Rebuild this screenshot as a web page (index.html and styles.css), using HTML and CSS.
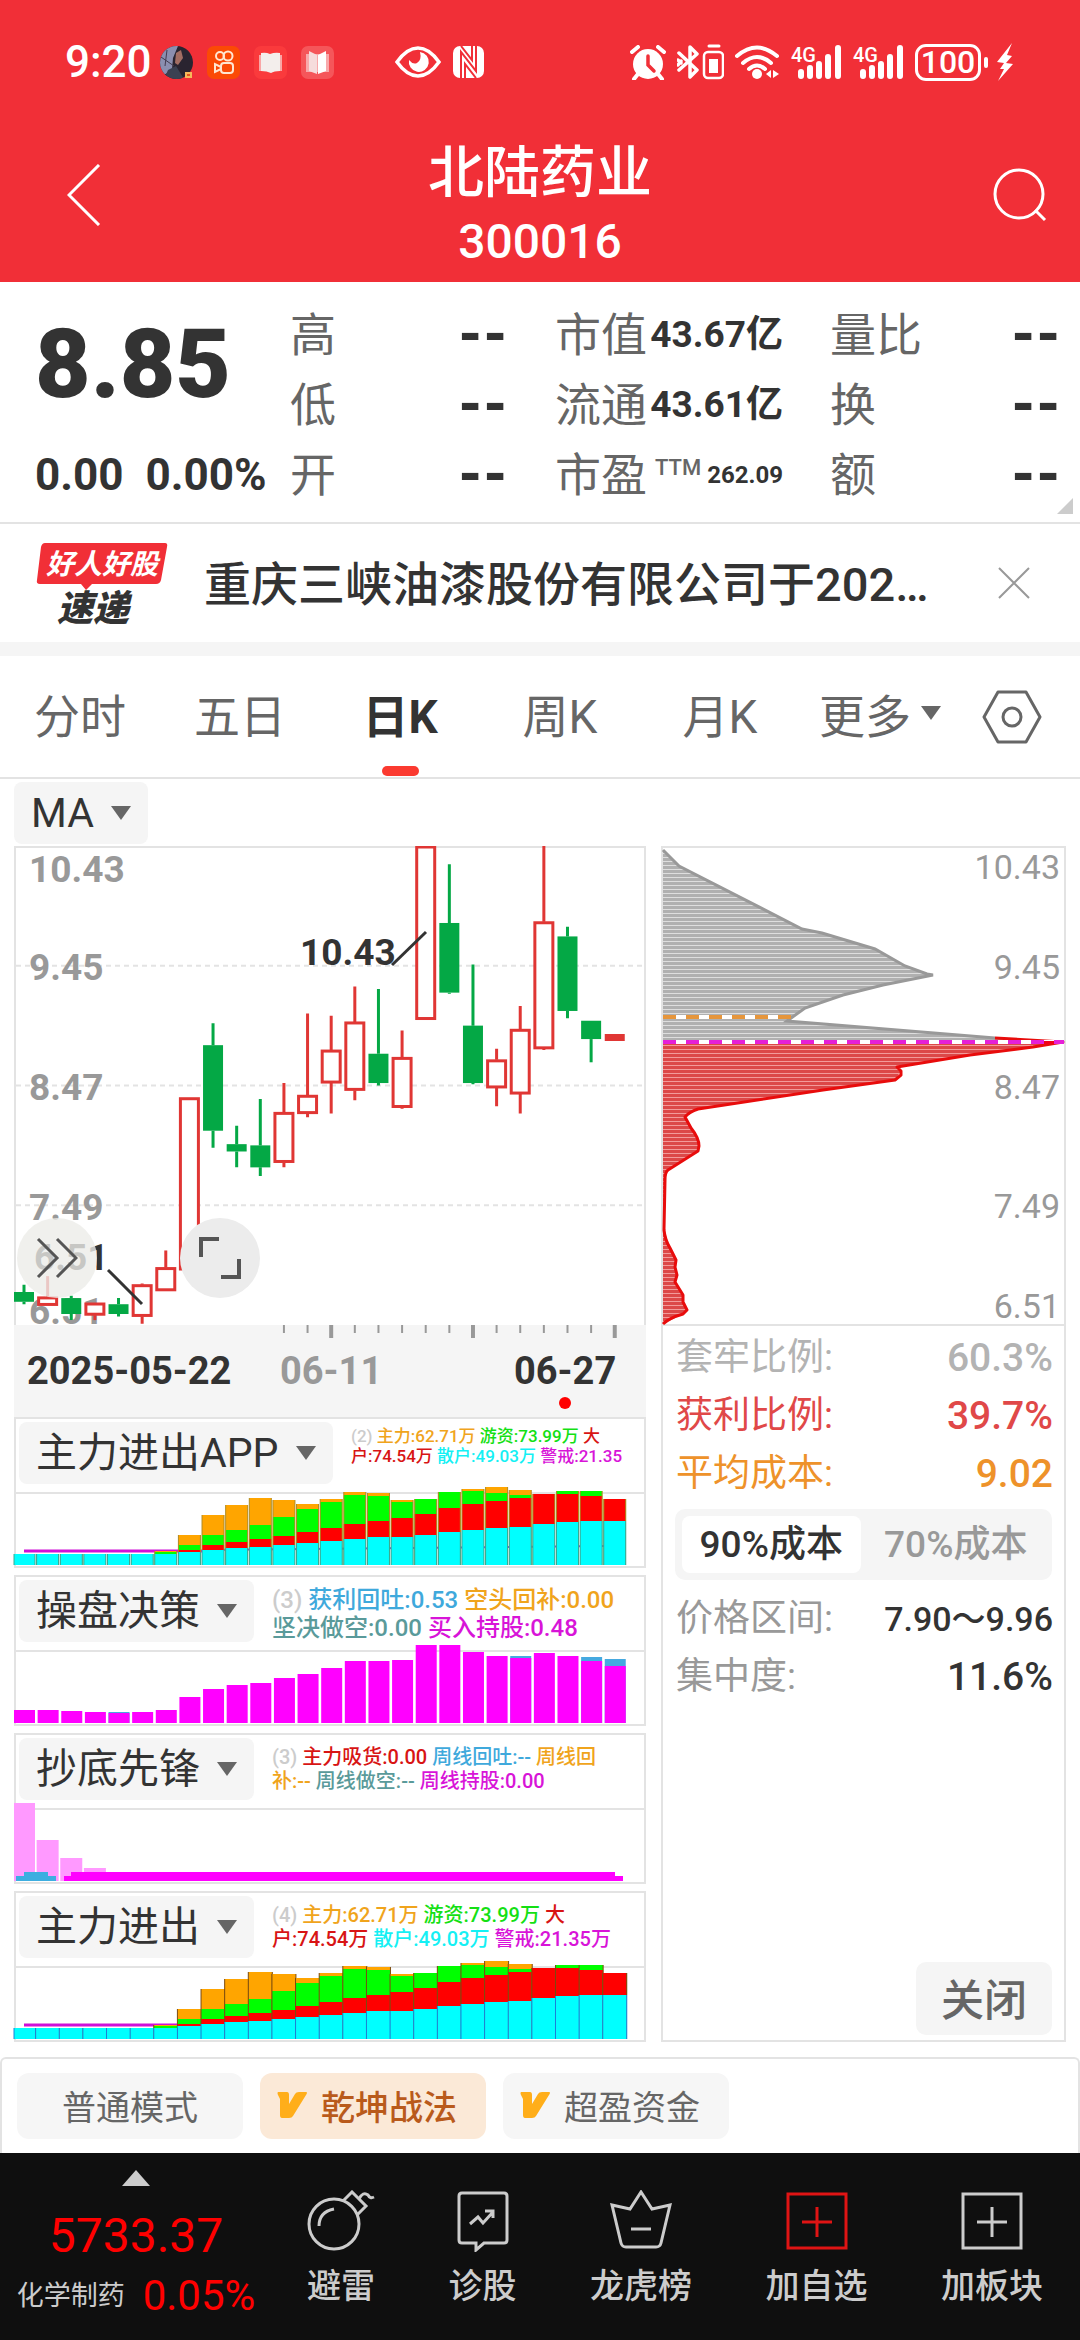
FILE: index.html
```html
<!DOCTYPE html>
<html lang="zh-CN">
<head>
    <meta charset="UTF-8">
    <meta name="viewport" content="width=device-width, initial-scale=1.0">
    <title>北陆药业 300016</title>
    <link rel="stylesheet" href="styles.css">
</head>
<body>
    <header class="top">
        <div class="status">
            <span class="clock">9:20</span>
            <div class="status-apps">
                <svg width="33" height="33" viewBox="0 0 33 33">
                    <clipPath id="face"><circle cx="16.5" cy="16.5" r="16.5"/></clipPath>
                    <g clip-path="url(#face)">
                        <rect width="33" height="33" fill="#2a2430"/>
                        <path d="M0 0h18l-5 12-1 12-8 5-4-3z" fill="#8b8fb0"/>
                        <path d="M1 11l13 9M7 4l-2 16" stroke="#433c50" fill="none"/>
                        <path d="M16 7l5-3 2 8-5 7-3-2z" fill="#a36e63"/>
                        <path d="M4 33l4-9 8-4 8 13z" fill="#3b4152"/>
                    </g>
                    <rect x="25" y="26" width="7" height="6" fill="#f7b85a"/>
                    <path d="M27 28h3v2h-3z" fill="#e2571d"/>
                </svg>
                <svg width="33" height="33" viewBox="0 0 33 33">
                    <rect width="33" height="33" rx="7" fill="#fb4a05"/>
                    <g fill="none" stroke="#ffe6d0" stroke-width="2">
                        <circle cx="13" cy="10" r="4"/><circle cx="21" cy="10" r="4.500"/>
                        <rect x="14" y="17" width="12" height="10" rx="3"/>
                        <path d="M14 21l-6-3v8l6-3"/>
                    </g>
                </svg>
                <svg width="33" height="33" viewBox="0 0 33 33">
                    <rect width="33" height="33" rx="7" fill="#fa3a3c"/>
                    <path d="M5 9h23v16H5z" fill="#f9a6a6"/>
                    <path d="M7 7q5-1 9 1 5-2 10-1v18q-6 0-9 2-4-2-10-2z" fill="#f3eeec"/>
                </svg>
                <svg width="33" height="33" viewBox="0 0 33 33">
                    <rect width="33" height="33" rx="7" fill="#f5565a"/>
                    <path d="M5 8h23v18H5z" fill="#f8a9ab"/>
                    <path d="M8 5l8 4v19l-8-3z" fill="#f6dcdc"/>
                    <path d="M25 5l-8 4v19l8-3z" fill="#fff"/>
                </svg>
            </div>
            <div class="status-flags">
                <svg width="46" height="32" viewBox="0 0 46 32">
                    <path d="M2 16Q12 2 23 2t21 14Q34 30 23 30T2 16z" fill="none" stroke="#fff" stroke-width="3.500"/>
                    <path d="M25 6a10 10 0 1 1-11 8q4 5 8 3 5-3 3-11z" fill="#fff"/>
                </svg>
                <svg width="31" height="32" viewBox="0 0 31 32">
                    <rect width="31" height="32" rx="7" fill="#fff"/>
                    <path d="M8 32V6l15 19V0" fill="none" stroke="#f12f37" stroke-width="2"/>
                    <path d="M12 32V18l11 14M19 0v14L8 0" fill="none" stroke="#f12f37" stroke-width="2"/>
                </svg>
            </div>
            <div class="status-radio">
                <svg width="36" height="35" viewBox="0 0 36 35">
                    <circle cx="18" cy="19" r="15" fill="#fff"/>
                    <path d="M2 7l6-5M34 7l-6-5M8 29l-4 5M28 29l4 5" stroke="#fff" stroke-width="4" stroke-linecap="round"/>
                    <path d="M18 11v9l6 6" fill="none" stroke="#f12f37" stroke-width="3.500" stroke-linecap="round"/>
                </svg>
                <svg width="47" height="36" viewBox="0 0 47 36">
                    <path d="M2 9l18 17-7 7V3l7 7L2 26M1 16l3 3M1 21l3-4" fill="none" stroke="#fff" stroke-width="3.500" stroke-linejoin="round" stroke-linecap="round"/>
                    <rect x="27" y="8" width="19" height="26" rx="4" fill="none" stroke="#fff" stroke-width="2.500"/>
                    <path d="M32 15h9v14h-9z" fill="#fff"/>
                    <path d="M32 2h10" stroke="#fff" stroke-width="3" stroke-linecap="round"/>
                </svg>
                <svg width="45" height="35" viewBox="0 0 45 35">
                    <path d="M2 11q20-17 40 0M8 18q14-12 28 0M14 24q8-7 16 0" fill="none" stroke="#fff" stroke-width="4" stroke-linecap="round"/>
                    <circle cx="22" cy="29" r="5" fill="#fff"/>
                    <path d="M31 29l5-4v8zM38 25l6 4-6 4z" fill="#fff"/>
                </svg>
                <svg class="signal" width="51" height="35" viewBox="0 0 51 35">
                    <text x="0" y="17">4G</text>
                    <path d="M10 27v4M19 23v8M28 19v12M37 12v19M47 3v28" stroke="#fff" stroke-width="6" stroke-linecap="round"/>
                </svg>
                <svg class="signal" width="51" height="35" viewBox="0 0 51 35">
                    <text x="0" y="17">4G</text>
                    <path d="M10 27v4M19 23v8M28 19v12M37 12v19M47 3v28" stroke="#fff" stroke-width="6" stroke-linecap="round"/>
                </svg>
                <span class="battery">100</span>
                <svg width="18" height="38" viewBox="0 0 18 38">
                    <path d="M16 0L1 19l7 1-4 6h4L2 38l15-17-7-1 6-7-5-1z" fill="#fff"/>
                </svg>
            </div>
        </div>
        <div class="title-row">
            <button class="icon-btn" type="button" aria-label="返回">
                <svg width="34" height="62" viewBox="0 0 34 62">
                    <path d="M32 1L2 31l30 30" fill="none" stroke="#fff" stroke-width="3"/>
                </svg>
            </button>
            <div class="stock">
                <h1>北陆药业</h1>
                <p>300016</p>
            </div>
            <button class="icon-btn" type="button" aria-label="搜索">
                <svg width="54" height="54" viewBox="0 0 54 54">
                    <circle cx="26" cy="26" r="24" fill="none" stroke="#fff" stroke-width="3"/>
                    <path d="M42 42l10 10" stroke="#fff" stroke-width="3"/>
                </svg>
            </button>
        </div>
    </header>

    <main>
        <section class="quote">
            <div class="price">
                <strong>8.85</strong>
                <p><span>0.00</span><span>0.00%</span></p>
            </div>
            <dl class="facts">
                <div><dt>高</dt><dd>--</dd></div>
                <div><dt>市值</dt><dd class="mid">43.67亿</dd></div>
                <div><dt>量比</dt><dd>--</dd></div>
                <div><dt>低</dt><dd>--</dd></div>
                <div><dt>流通</dt><dd class="mid">43.61亿</dd></div>
                <div><dt>换</dt><dd>--</dd></div>
                <div><dt>开</dt><dd>--</dd></div>
                <div><dt>市盈<sup>TTM</sup></dt><dd class="small">262.09</dd></div>
                <div><dt>额</dt><dd>--</dd></div>
            </dl>
            <svg class="corner" width="16" height="16" viewBox="0 0 16 16"><path d="M16 0v16H0z" fill="#ccc"/></svg>
        </section>

        <section class="news">
            <svg class="news-logo" width="132" height="82" viewBox="0 0 132 82">
                <path d="M9 1h120q3 0 2 4l-6 33q-1 4-5 4H56l-6 6-5-6H4q-4 0-3-4L5 5q1-4 4-4z" fill="#f12f37"/>
                <text class="logo-top" x="10" y="32">好人好股</text>
                <text class="logo-bottom" x="21" y="79">速递</text>
            </svg>
            <a class="headline" href="#news">重庆三峡油漆股份有限公司于202…</a>
            <button class="icon-btn" type="button" aria-label="关闭公告">
                <svg width="32" height="32" viewBox="0 0 32 32"><path d="M1 1l30 30M31 1L1 31" stroke="#999" stroke-width="2"/></svg>
            </button>
        </section>

        <nav class="tabs">
            <button type="button">分时</button>
            <button type="button">五日</button>
            <button type="button" class="active">日K</button>
            <button type="button">周K</button>
            <button type="button">月K</button>
            <button type="button" class="more">更多</button>
            <button type="button" class="settings" aria-label="设置">
                <svg width="60" height="54" viewBox="0 0 60 54">
                    <path d="M16 2h28l14 25-14 25H16L2 27z" fill="none" stroke="#666" stroke-width="3" stroke-linejoin="round"/>
                    <circle cx="30" cy="27" r="9" fill="none" stroke="#666" stroke-width="3"/>
                </svg>
            </button>
        </nav>

        <div class="charts">
            <div class="picker-row">
                <label class="picker"><select aria-label="均线指标"><option>MA</option></select></label>
            </div>

            <div class="left">
                <div class="kline">
                    <svg id="kline" viewBox="0 0 632 479"></svg>
                    <div class="kline-tools">
                        <button type="button" aria-label="展开">
                            <svg width="42" height="42" viewBox="0 0 42 42"><path d="M2 2l19 19L2 40M21 2l19 19-19 19" fill="none" stroke="#555" stroke-width="3"/></svg>
                        </button>
                        <button type="button" class="solid" aria-label="全屏">
                            <svg width="42" height="42" viewBox="0 0 42 42"><path d="M2 20V2h18M40 22v18H22" fill="none" stroke="#555" stroke-width="4"/></svg>
                        </button>
                    </div>
                </div>
                <svg id="dates" class="dates" viewBox="0 0 632 92"></svg>

                <section class="indicator">
                    <div class="indicator-head">
                        <label class="picker"><select aria-label="指标一"><option>主力进出APP</option></select></label>
                        <p class="legend tiny"><span class="c-dim">(2)</span> <span class="c-orange">主力:62.71万</span> <span class="c-green">游资:73.99万</span> <span class="c-red">大<br>户:74.54万</span> <span class="c-cyan">散户:49.03万</span> <span class="c-pink">警戒:21.35</span></p>
                    </div>
                    <svg id="flow-app" viewBox="0 0 632 72"></svg>
                </section>
                <section class="indicator">
                    <div class="indicator-head">
                        <label class="picker"><select aria-label="指标二"><option>操盘决策</option></select></label>
                        <p class="legend large"><span class="c-dim">(3)</span> <span class="c-blue">获利回吐:0.53</span> <span class="c-orange">空头回补:0.00</span><br><span class="c-teal">坚决做空:0.00</span> <span class="c-pink">买入持股:0.48</span></p>
                    </div>
                    <svg id="decision" viewBox="0 0 632 72"></svg>
                </section>
                <section class="indicator">
                    <div class="indicator-head">
                        <label class="picker"><select aria-label="指标三"><option>抄底先锋</option></select></label>
                        <p class="legend"><span class="c-dim">(3)</span> <span class="c-red">主力吸货:0.00</span> <span class="c-blue">周线回吐:--</span> <span class="c-orange">周线回<br>补:--</span> <span class="c-teal">周线做空:--</span> <span class="c-pink">周线持股:0.00</span></p>
                    </div>
                    <svg id="bottom-fish" viewBox="0 0 632 72"></svg>
                </section>
                <section class="indicator">
                    <div class="indicator-head">
                        <label class="picker"><select aria-label="指标四"><option>主力进出</option></select></label>
                        <p class="legend"><span class="c-dim">(4)</span> <span class="c-orange">主力:62.71万</span> <span class="c-green">游资:73.99万</span> <span class="c-red">大<br>户:74.54万</span> <span class="c-cyan">散户:49.03万</span> <span class="c-pink">警戒:21.35万</span></p>
                    </div>
                    <svg id="flow" viewBox="0 0 632 72"></svg>
                </section>
            </div>

            <aside class="chips">
                <svg class="chips-chart" viewBox="0 0 405 480">
                    <defs>
                        <pattern id="gray-lines" width="8" height="4" patternUnits="userSpaceOnUse"><rect width="8" height="4" fill="#dedede"/><rect width="8" height="3" fill="#b0b0b0"/></pattern>
                        <pattern id="red-lines" width="8" height="4" patternUnits="userSpaceOnUse"><rect width="8" height="4" fill="#f39a9a"/><rect width="8" height="3" fill="#dc4848"/></pattern>
                    </defs>
                    <path d="M0 1h404M0 479h404" stroke="#e3e3e3" stroke-width="2"/>
                    <path fill="url(#gray-lines)" d="M2 4L18 20 141 83 161 87 214 103 244 120 266 128 272 129 222 139 182 149 144 162 126 175 334 192 402 196H2z"/>
                    <path fill="url(#red-lines)" d="M2 196H402L372 201 309 209 236 221 240 225 234 234 162 244 37 263 24 271 30 282 38 296 37 305 7 324 4 327 3 384 9 402 15 414 14 421 16 429 14 436 22 449 22 456 26 464 22 468 2 478z"/>
                    <path fill="none" stroke="#999" stroke-width="3" d="M2 4L18 20 141 83 161 87 214 103 244 120 266 128 272 129 222 139 182 149 144 162 126 175 334 192"/>
                    <path fill="none" stroke="#e80c0c" stroke-width="3" stroke-linejoin="round" d="M334 192L402 196 372 201 309 209 236 221 240 225 240 229 234 234 162 244 37 263Q28 266 24 271L30 282Q38 292 38 300L37 305 7 324Q4 326 4 334L3 384Q4 394 9 402L15 414 14 421 16 429 14 436 22 449 22 456 26 464 22 468Q8 472 2 478"/>
                    <path d="M2 171h128" stroke="#fff" stroke-width="4"/>
                    <path d="M2 171h128" stroke="#e6963c" stroke-width="4" stroke-dasharray="13 10"/>
                    <path d="M2 196h400" stroke="#fff" stroke-width="4"/>
                    <path d="M380 195h22v3h-22z" fill="#f00018"/>
                    <path d="M2 196h401" stroke="#e520d8" stroke-width="4" stroke-dasharray="13 10"/>
                    <g class="chips-axis">
                        <text x="399" y="33">10.43</text>
                        <text x="399" y="133">9.45</text>
                        <text x="399" y="253">8.47</text>
                        <text x="399" y="372">7.49</text>
                        <text x="399" y="472">6.51</text>
                    </g>
                </svg>
                <dl class="chips-list">
                    <div class="trapped"><dt>套牢比例:</dt><dd>60.3%</dd></div>
                    <div class="profit"><dt>获利比例:</dt><dd>39.7%</dd></div>
                    <div class="average"><dt>平均成本:</dt><dd>9.02</dd></div>
                </dl>
                <div class="segment">
                    <button type="button" class="active">90%成本</button>
                    <button type="button">70%成本</button>
                </div>
                <dl class="chips-list">
                    <div><dt>价格区间:</dt><dd class="range">7.90～9.96</dd></div>
                    <div><dt>集中度:</dt><dd>11.6%</dd></div>
                </dl>
                <button type="button" class="chips-close">关闭</button>
            </aside>
        </div>

        <div class="modes">
            <button type="button" class="plain">普通模式</button>
            <button type="button" class="active">
                <svg width="30" height="28" viewBox="0 0 30 28"><path d="M1 1h9q2 0 2 3v9l6-10q1-2 4-2h7q2 0 0 3L16 25q-1 2-4 2H5q-2 0-2-3V8L1 4q-1-2 0-3z" fill="#ffae1a"/></svg>
                乾坤战法
            </button>
            <button type="button">
                <svg width="30" height="28" viewBox="0 0 30 28"><path d="M1 1h9q2 0 2 3v9l6-10q1-2 4-2h7q2 0 0 3L16 25q-1 2-4 2H5q-2 0-2-3V8L1 4q-1-2 0-3z" fill="#ffae1a"/></svg>
                超盈资金
            </button>
        </div>
    </main>

    <footer class="bottom">
        <a class="index" href="#index">
            <svg width="28" height="16" viewBox="0 0 28 16"><path d="M14 0l14 16H0z" fill="#ccc"/></svg>
            <strong>5733.37</strong>
            <span><small>化学制药</small>0.05%</span>
        </a>
        <nav class="actions">
            <button type="button">
                <svg width="68" height="62" viewBox="0 0 68 62" fill="none" stroke="#ccc" stroke-width="3">
                    <circle cx="27" cy="34" r="25"/>
                    <path d="M12 36q0-14 15-17M36 11l9-9 14 14-9 9M52 9q4-8 9-4 2 4 6 2"/>
                </svg>
                避雷
            </button>
            <button type="button">
                <svg width="52" height="62" viewBox="0 0 52 62" fill="none" stroke="#ccc" stroke-width="3">
                    <path d="M5 3h42q3 0 3 3v44q0 3-3 3H27l-8 7v-7H5q-3 0-3-3V6q0-3 3-3z"/>
                    <path d="M13 34l8-7 5 6 10-11M28 21h8v7"/>
                </svg>
                诊股
            </button>
            <button type="button">
                <svg width="62" height="62" viewBox="0 0 62 62" fill="none" stroke="#ccc" stroke-width="3">
                    <path d="M2 15l18 4L31 2l11 17 18-4-9 38q-1 4-5 4H16q-4 0-5-4zM21 39h20"/>
                </svg>
                龙虎榜
            </button>
            <button type="button">
                <svg width="62" height="62" viewBox="0 0 62 62" fill="none" stroke="#e01414" stroke-width="3">
                    <path d="M2 4h58v54H2zM31 17v30M16 32h30"/>
                </svg>
                加自选
            </button>
            <button type="button">
                <svg width="62" height="62" viewBox="0 0 62 62" fill="none" stroke="#ccc" stroke-width="3">
                    <path d="M2 4h58v54H2zM31 17v30M16 32h30"/>
                </svg>
                加板块
            </button>
        </nav>
    </footer>

    <script src="charts.js"></script>
</body>
</html>
```
FILE: styles.css
```css
* {
    box-sizing: border-box;
}
body {
    margin: 0;
    background: #fff;
    color: #333;
    font-family: Roboto, "Noto Sans CJK SC", sans-serif;
}
h1, p, dl, dd {
    margin: 0;
}
button, select {
    margin: 0;
    padding: 0;
    border: 0;
    background: none;
    color: inherit;
    font: inherit;
}
a {
    color: inherit;
    text-decoration: none;
}
svg {
    display: block;
    flex-shrink: 0;
}

/* header */
.top {
    height: 282px;
    background: #f12f37;
    color: #fff;
}
.status {
    display: flex;
    align-items: center;
    height: 124px;
    padding: 0 66px 0 65px;
}
.clock {
    width: 95px;
    font-size: 44px;
    font-weight: 500;
}
.status-apps {
    display: flex;
    gap: 14px;
}
.status-flags {
    display: flex;
    gap: 12px;
    margin-left: 61px;
}
.status-radio {
    display: flex;
    align-items: center;
    gap: 11px;
    margin-left: auto;
}
.signal, .news-logo {
    overflow: visible;
}
.signal text {
    fill: #fff;
    font-size: 20px;
    font-weight: 500;
}
.battery {
    position: relative;
    width: 66px;
    margin-right: 4px;
    border: 3px solid #fff;
    border-radius: 11px;
    font-size: 32px;
    font-weight: 500;
    line-height: 31px;
    text-align: center;
}
.battery::after {
    content: "";
    position: absolute;
    top: 10px;
    right: -10px;
    width: 4px;
    height: 11px;
    border-radius: 2px;
    background: #fff;
}
.title-row {
    display: flex;
    align-items: center;
    justify-content: space-between;
    height: 142px;
    padding: 0 33px 0 67px;
}
.stock {
    padding: 18px 14px 0 0;
    text-align: center;
}
.stock h1 {
    font-size: 56px;
    font-weight: 500;
    line-height: 76px;
}
.stock p {
    font-size: 48px;
    font-weight: 500;
    line-height: 62px;
}

/* quote */
.quote {
    position: relative;
    display: flex;
    padding: 18px 19px 12px 35px;
    border-bottom: 2px solid #e3e3e3;
}
.price {
    width: 255px;
    white-space: nowrap;
}
.price strong {
    display: block;
    font-size: 96px;
    font-weight: 900;
    line-height: 128px;
}
.price p {
    display: flex;
    gap: 22px;
    padding-top: 12px;
    font-size: 44px;
    font-weight: 700;
    line-height: 70px;
}
.facts {
    flex: 1;
    display: grid;
    grid-template-columns: 218fr 228fr 231fr;
    column-gap: 47px;
}
.facts div {
    display: flex;
    justify-content: space-between;
    height: 70px;
    line-height: 70px;
    white-space: nowrap;
}
.facts dt {
    color: #666;
    font-size: 46px;
}
.facts dd {
    font-size: 56px;
    font-weight: 900;
}
.facts .mid {
    font-size: 37px;
    font-weight: 700;
}
.facts .small {
    font-size: 24px;
    font-weight: 700;
}
.facts sup {
    padding-left: 8px;
    font-size: 22px;
    font-weight: 500;
    line-height: 22px;
}
.corner {
    position: absolute;
    right: 7px;
    bottom: 8px;
}

/* news strip */
.news {
    display: flex;
    align-items: center;
    height: 118px;
    padding: 0 50px 0 36px;
}
.logo-top {
    fill: #fff;
    font-size: 28px;
    font-style: italic;
    font-weight: 700;
}
.logo-bottom {
    fill: #333;
    font-size: 36px;
    font-style: italic;
    font-weight: 900;
}
.headline {
    flex: 1;
    padding: 0 0 6px 36px;
    font-size: 47px;
    font-weight: 500;
    white-space: nowrap;
}

/* period tabs */
.tabs {
    display: flex;
    height: 137px;
    padding-right: 16px;
    border-top: 14px solid #f5f5f5;
    border-bottom: 2px solid #e3e3e3;
    color: #666;
    font-size: 46px;
}
.tabs button {
    position: relative;
    flex: 160;
    padding-bottom: 8px;
}
.tabs .active {
    color: #333;
    font-weight: 700;
}
.tabs .active::after {
    content: "";
    position: absolute;
    left: calc(50% - 18px);
    bottom: 1px;
    width: 37px;
    height: 10px;
    border-radius: 5px;
    background: #fb3a30;
}
.more {
    display: flex;
    align-items: center;
    justify-content: center;
    gap: 10px;
}
.more::after, .picker::after {
    content: "";
    border: 10px solid transparent;
    border-top: 14px solid #666;
    border-bottom: 0;
}
.tabs .settings {
    display: flex;
    flex: 104;
    align-items: center;
    justify-content: center;
    padding: 0;
}

/* charts */
.charts {
    display: grid;
    grid-template-columns: 632fr 405fr;
    column-gap: 15px;
    padding: 3px 14px 15px;
}
.picker-row {
    display: flex;
    grid-column: 1 / 3;
    padding-bottom: 2px;
}
.picker {
    display: flex;
    align-items: center;
    gap: 17px;
    height: 62px;
    padding: 0 17px;
    border-radius: 8px;
    background: #f5f5f5;
    font-size: 41px;
}
.picker select {
    height: 62px;
    appearance: none;
    line-height: 62px;
}
.kline {
    position: relative;
}
.kline svg, .dates {
    width: 100%;
}
.kline-tools {
    position: absolute;
    left: 3px;
    bottom: 27px;
    display: flex;
    gap: 83px;
}
.kline-tools button {
    display: flex;
    align-items: center;
    justify-content: center;
    width: 80px;
    height: 80px;
    border-radius: 50%;
    background: rgba(236, 236, 233, 0.8);
}
.kline-tools .solid {
    background: #ececec;
}
.kline-tools svg {
    width: 42px;
}
.axis-label {
    fill: #999;
    font-size: 37px;
    font-weight: 700;
}
.axis-label.dark {
    fill: #333;
}
.dates .axis-label {
    font-size: 38px;
}
.grid-line {
    stroke: #e3e3e3;
    stroke-width: 2;
    stroke-dasharray: 5 4;
}
.frame {
    fill: none;
    stroke: #e3e3e3;
    stroke-width: 2;
}
.pointer {
    stroke: #333;
    stroke-width: 3;
}

/* indicators */
.indicator {
    border: 2px solid #e3e3e3;
}
.indicator + .indicator {
    margin-top: 7px;
}
.indicator-head {
    display: flex;
    align-items: center;
    gap: 18px;
    height: 75px;
    padding: 0 0 6px 3px;
    border-bottom: 2px solid #e3e3e3;
}
.indicator > svg {
    width: calc(100% + 4px);
    margin: 0 -2px;
    overflow: visible;
}
.legend {
    font-size: 20px;
    font-weight: 500;
    line-height: 24px;
    white-space: nowrap;
}
.legend.tiny {
    align-self: flex-start;
    padding-top: 7px;
    font-size: 17px;
    line-height: 20px;
}
.legend.large {
    padding-top: 6px;
    font-size: 24px;
    line-height: 28px;
}
.c-dim { color: #ccc; }
.c-orange { color: #f0a41c; }
.c-green { color: #14e014; }
.c-red { color: #d81414; }
.c-cyan { color: #14f0f4; }
.c-pink { color: #d814d8; }
.c-blue { color: #3fa9dc; }
.c-teal { color: #5a9a9a; }

/* chip distribution */
.chips {
    display: flex;
    flex-direction: column;
    border: solid #e3e3e3;
    border-width: 0 2px 2px;
}
.chips-chart {
    width: calc(100% + 4px);
    margin: 0 -2px;
}
.chips-axis {
    fill: #999;
    font-size: 34px;
    text-anchor: end;
}
.chips-list {
    padding: 3px 11px 0 13px;
    color: #333;
    font-size: 37px;
    line-height: 58px;
}
.chips-list div {
    display: flex;
    justify-content: space-between;
    height: 58px;
}
.chips-list dt {
    color: #999;
}
.chips-list dd {
    font-size: 39px;
    font-weight: 500;
}
.chips-list .range {
    font-size: 34px;
}
.trapped dt, .trapped dd {
    color: #b3b3b3;
}
.profit dt, .profit dd {
    color: #e04848;
}
.average dt, .average dd {
    color: #ee922a;
}
.segment {
    display: flex;
    gap: 6px;
    margin: 6px 12px 7px;
    padding: 7px;
    border-radius: 10px;
    background: #f5f5f5;
    color: #999;
    font-size: 37px;
    font-weight: 500;
}
.segment button {
    flex: 1;
    height: 57px;
    border-radius: 8px;
    line-height: 57px;
    white-space: nowrap;
}
.segment .active {
    background: #fff;
    color: #333;
}
.chips-close {
    align-self: flex-end;
    width: 136px;
    height: 73px;
    margin: auto 12px 5px 0;
    padding-bottom: 4px;
    border-radius: 10px;
    background: #f5f5f5;
    color: #666;
    font-size: 43px;
    font-weight: 500;
}

/* mode chips */
.modes {
    display: flex;
    gap: 17px;
    padding: 14px 15px;
    border: 2px solid #e3e3e3;
    border-bottom: 0;
    border-radius: 6px 6px 0 0;
    color: #666;
    font-size: 34px;
}
.modes button {
    display: flex;
    align-items: center;
    gap: 14px;
    width: 226px;
    height: 66px;
    padding: 0 17px 2px;
    border-radius: 12px;
    background: #f6f6f6;
    white-space: nowrap;
}
.modes .plain {
    justify-content: center;
}
.modes .active {
    background: #fbe9d7;
    color: #b95a1b;
    font-weight: 500;
}

/* bottom bar */
.bottom {
    display: flex;
    height: 187px;
    background: #0f0f0f;
    color: #ccc;
}
.index {
    display: flex;
    flex-direction: column;
    align-items: center;
    width: 272px;
    padding-top: 17px;
    color: #f00;
}
.index strong {
    padding-top: 22px;
    font-size: 48px;
    font-weight: 400;
    line-height: 56px;
}
.index span {
    display: flex;
    align-items: center;
    gap: 18px;
    font-size: 42px;
    line-height: 64px;
}
.index small {
    color: #ccc;
    font-size: 27px;
}
.actions {
    flex: 1;
    display: flex;
    align-items: flex-start;
    justify-content: space-between;
    padding: 37px 37px 0 35px;
}
.actions button {
    display: flex;
    flex-direction: column;
    align-items: center;
    gap: 11px;
    font-size: 34px;
    font-weight: 500;
    line-height: 46px;
}
```
FILE: charts.js
```js
const NS = "http://www.w3.org/2000/svg";
const STEP = 23.63;
const RED = "#e03634";
const GREEN = "#04a845";

function add(svg, name, attrs, text) {
    const el = document.createElementNS(NS, name);
    for (const key in attrs) {
        el.setAttribute(key, attrs[key]);
    }
    if (text) {
        el.textContent = text;
    }
    svg.appendChild(el);
}

function center(i) {
    return 10 + i * STEP;
}

// [high, top of body, bottom of body, low, rising]
const candles = [
    [6.84, 6.78, 6.70, 6.68, 0],
    [6.91, 6.74, 6.67, 6.67, 1],
    [6.75, 6.73, 6.60, 6.55, 0],
    [6.69, 6.69, 6.59, 6.55, 1],
    [6.73, 6.68, 6.60, 6.58, 0],
    [6.85, 6.84, 6.58, 6.52, 1],
    [7.12, 6.98, 6.79, 6.79, 1],
    [8.37, 8.37, 6.96, 6.96, 1],
    [8.98, 8.80, 8.10, 7.96, 0],
    [8.14, 7.99, 7.93, 7.80, 0],
    [8.36, 7.98, 7.80, 7.73, 0],
    [8.49, 8.25, 7.84, 7.80, 1],
    [9.06, 8.39, 8.24, 8.21, 1],
    [9.04, 8.76, 8.49, 8.24, 1],
    [9.28, 8.99, 8.43, 8.35, 1],
    [9.26, 8.73, 8.49, 8.47, 0],
    [8.92, 8.70, 8.29, 8.28, 1],
    [10.43, 10.43, 9.01, 9.01, 1],
    [10.28, 9.80, 9.23, 9.22, 0],
    [9.46, 8.96, 8.49, 8.48, 0],
    [8.77, 8.68, 8.45, 8.30, 1],
    [9.12, 8.93, 8.40, 8.24, 1],
    [10.43, 9.81, 8.77, 8.76, 1],
    [9.77, 9.69, 9.08, 9.02, 0],
    [9.00, 9.00, 8.85, 8.66, 0]
];

function priceY(price) {
    return (10.43 - price) / 3.92 * 479;
}

function drawKline() {
    const svg = document.getElementById("kline");
    add(svg, "path", { d: "M1 479V1h630v478", class: "frame" });
    [9.45, 8.47, 7.49].forEach((p) => {
        add(svg, "path", { d: `M2 ${priceY(p)}H630`, class: "grid-line" });
    });
    [["10.43", 36], ["9.45", 134], ["8.47", 254], ["7.49", 374], ["6.51", 478]].forEach(([label, y]) => {
        add(svg, "text", { x: 15, y: y, class: "axis-label" }, label);
    });
    candles.forEach(([high, top, bottom, low, up], i) => {
        const x = center(i);
        const y = priceY(top);
        const h = priceY(bottom) - y;
        const color = up ? RED : GREEN;
        add(svg, "path", { d: `M${x} ${priceY(high)}V${y}M${x} ${y + h}V${priceY(low)}`, stroke: color, "stroke-width": 3 });
        if (up) {
            add(svg, "rect", { x: x - 9, y: y + 1, width: 18, height: h - 2, fill: "#fff", stroke: color, "stroke-width": 3 });
        } else {
            add(svg, "rect", { x: x - 10, y: y, width: 20, height: h, fill: color });
        }
    });
    // last day is flat
    add(svg, "rect", { x: center(25) - 10, y: 188, width: 20, height: 7, fill: RED });

    add(svg, "text", { x: 286, y: 119, class: "axis-label dark" }, "10.43");
    add(svg, "path", { d: "M378 119L412 86", class: "pointer" });
    add(svg, "text", { x: 20, y: 424, class: "axis-label dark" }, "6.51");
    add(svg, "path", { d: "M94 424L128 458", class: "pointer" });
}

function drawDates() {
    const svg = document.getElementById("dates");
    add(svg, "rect", { width: 632, height: 92, fill: "#f5f5f5" });
    for (let i = 11; i < 26; i++) {
        const major = i % 6 === 1;
        add(svg, "path", { d: `M${center(i)} 0v${major ? 13 : 8}`, stroke: "#999", "stroke-width": major ? 4 : 2 });
    }
    add(svg, "text", { x: 13, y: 59, class: "axis-label dark" }, "2025-05-22");
    add(svg, "text", { x: 266, y: 59, class: "axis-label" }, "06-11");
    add(svg, "text", { x: 500, y: 59, class: "axis-label dark" }, "06-27");
    add(svg, "circle", { cx: 551, cy: 78, r: 6, fill: "#f00" });
}

// running tops: retail, large, hot money, main force
const flows = [
    [11, 11, 11, 11], [11, 11, 11, 11], [11, 11, 11, 11], [11, 11, 11, 11], [11, 11, 11, 11], [11, 11, 11, 11],
    [11, 11, 13, 14], [13, 15, 20, 30], [15, 20, 30, 50], [17, 23, 35, 60], [18, 26, 40, 67], [20, 29, 48, 65],
    [22, 33, 56, 61], [24, 37, 63, 66], [26, 41, 70, 73], [28, 44, 69, 72], [28, 47, 63, 65], [30, 51, 66, 66],
    [33, 57, 73, 73], [35, 61, 74, 76], [37, 64, 72, 78], [38, 67, 70, 75], [41, 71, 71, 71], [43, 71, 74, 74],
    [44, 69, 74, 74], [44, 66, 66, 66]
];

function drawFlow(id, width, edge, inner) {
    const svg = document.getElementById(id);
    add(svg, "path", { d: "M10 57H190", stroke: "#d010d8", "stroke-width": 3 });
    add(svg, "path", { d: "M190 56L590 52", stroke: "#7a50e0", "stroke-width": 2 });
    flows.forEach((tops, i) => {
        const left = Math.max(0, center(i) - width / 2);
        const w = center(i) + width / 2 - left;
        ["#ffa500", "#00ff00", "#ff0000", "#00ffff"].forEach((color, k) => {
            const h = tops[3 - k];
            add(svg, "rect", { x: left, y: 71 - h, width: w, height: h, fill: color });
        });
        add(svg, "path", { d: `M${left} ${71 - tops[3]}V${71 - tops[0]}M${left + w} ${71 - tops[3]}V${71 - tops[0]}`, stroke: edge });
        add(svg, "path", { d: `M${left} ${71 - tops[0]}V71M${left + w} ${71 - tops[0]}V71`, stroke: inner });
    });
}

function drawDecision() {
    const svg = document.getElementById("decision");
    const hold = [13, 13, 12, 11, 10, 11, 13, 26, 34, 38, 40, 45, 49, 55, 62, 62, 63, 78, 78, 71, 67, 65, 70, 67, 62, 57];
    const sell = { 4: 11, 21: 67, 24: 66, 25: 64 };
    hold.forEach((h, i) => {
        const left = Math.max(0, center(i) - 10);
        const w = center(i) + 11 - left;
        if (sell[i]) {
            add(svg, "rect", { x: left, y: 71 - sell[i], width: w, height: sell[i], fill: "#45a9e0" });
        }
        add(svg, "rect", { x: left, y: 71 - h, width: w, height: h, fill: "#ff00ff" });
    });
}

function drawBottomFish() {
    const svg = document.getElementById("bottom-fish");
    [78, 41, 23, 13, 9].forEach((h, i) => {
        const left = Math.max(0, center(i) - 11);
        add(svg, "rect", { x: left, y: 71 - h, width: center(i) + 11 - left, height: h, fill: "#ff99ff" });
    });
    add(svg, "path", { d: "M2 71v-5h8v-4h24v4h8v5z", fill: "#3daee0" });
    add(svg, "path", { d: "M50 71v-5h7v-4h544v4h8v5z", fill: "#ff00ff" });
}

drawKline();
drawDates();
drawFlow("flow-app", 22, "#b08a20", "#3aa890");
drawDecision();
drawBottomFish();
drawFlow("flow", 24, "#7a4a10", "#1a80d8");
```
